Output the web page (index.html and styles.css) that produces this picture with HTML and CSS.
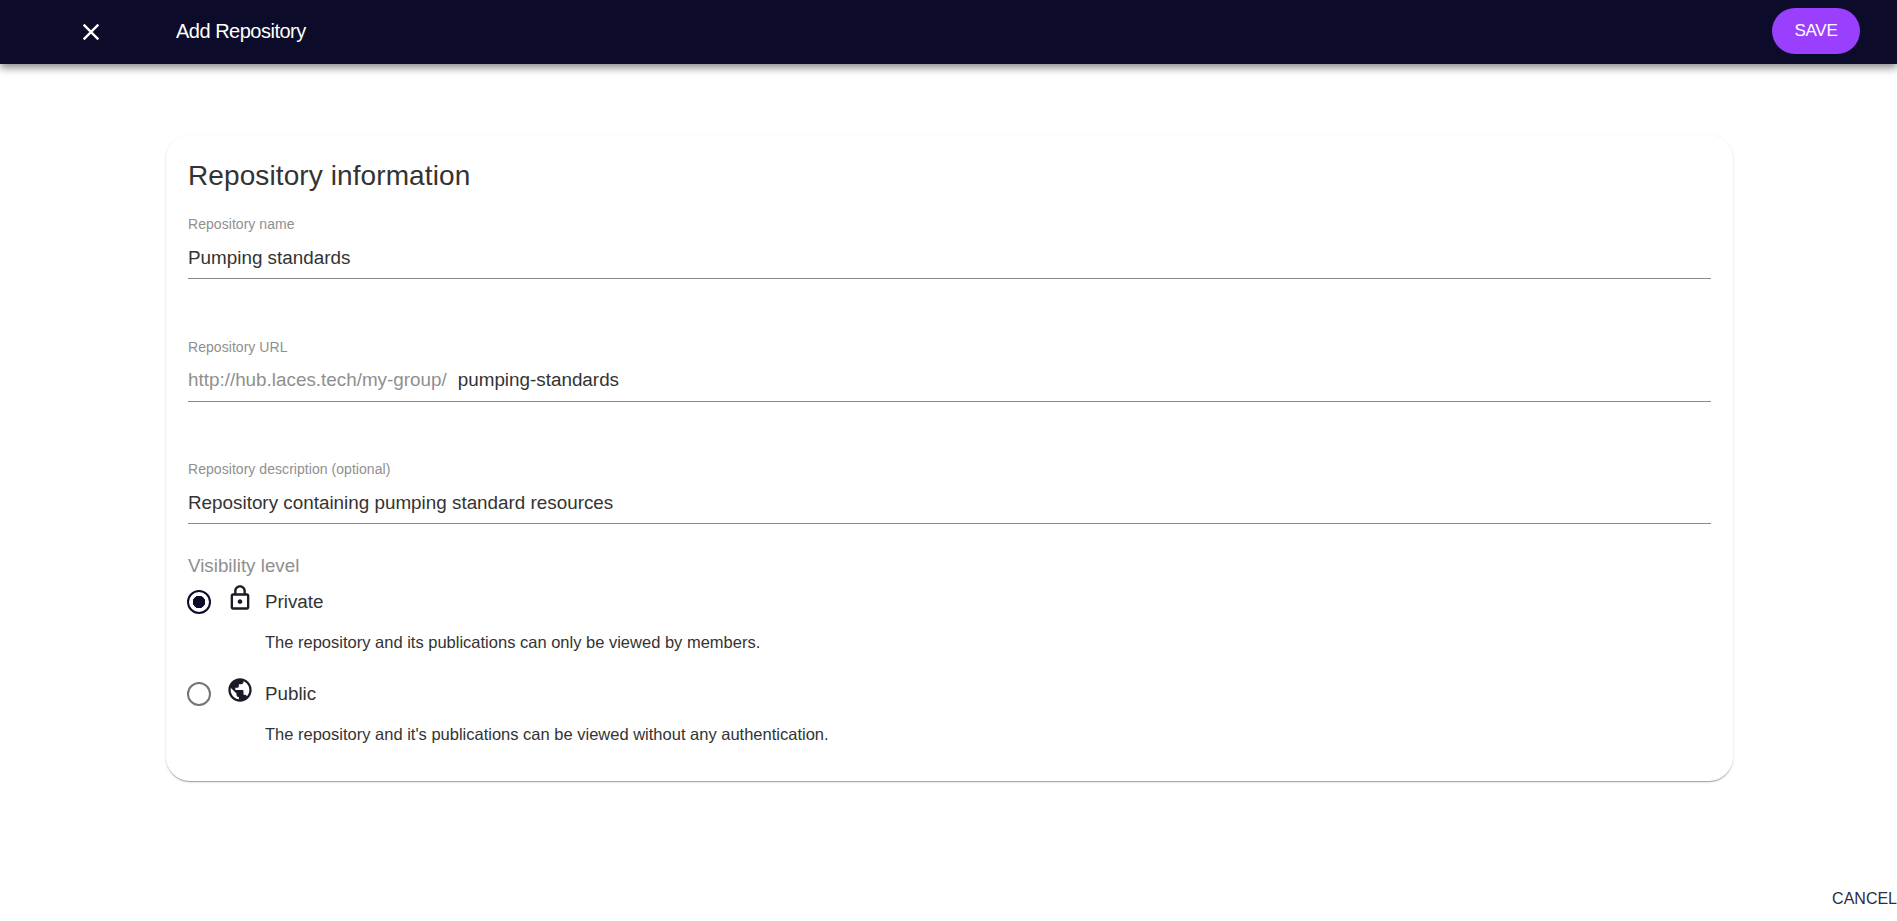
FILE: index.html
```html
<!DOCTYPE html>
<html lang="en">
<head>
<meta charset="utf-8">
<title>Add Repository</title>
<link rel="stylesheet" href="styles.css">
</head>
<body>
<header class="appbar">
  <button class="close" aria-label="Close">
    <svg viewBox="0 0 24 24" width="28" height="28"><path fill="#fff" d="M19 6.41 17.59 5 12 10.59 6.41 5 5 6.41 10.59 12 5 17.59 6.41 19 12 13.41 17.59 19 19 17.59 13.41 12z"/></svg>
  </button>
  <div class="appbar-title">Add Repository</div>
  <button class="save">SAVE</button>
</header>
<main class="content">
  <section class="card">
    <h2 class="card-title">Repository information</h2>
    <div class="field">
      <label class="field-label">Repository name</label>
      <div class="field-input"><span class="value">Pumping standards</span></div>
    </div>
    <div class="field">
      <label class="field-label">Repository URL</label>
      <div class="field-input"><span class="prefix">http://hub.laces.tech/my-group/</span><span class="value">pumping-standards</span></div>
    </div>
    <div class="field">
      <label class="field-label">Repository description (optional)</label>
      <div class="field-input"><span class="value">Repository containing pumping standard resources</span></div>
    </div>
    <div class="visibility-label">Visibility level</div>
    <div class="option">
      <span class="radio radio-on"></span>
      <svg class="option-icon lock" viewBox="0 0 24 24" width="28" height="28"><path fill="#1b1b27" d="M18 8h-1V6c0-2.76-2.24-5-5-5S7 3.24 7 6v2H6c-1.1 0-2 .9-2 2v10c0 1.1.9 2 2 2h12c1.1 0 2-.9 2-2V10c0-1.1-.9-2-2-2zM9 6c0-1.66 1.34-3 3-3s3 1.34 3 3v2H9V6zm9 14H6V10h12v10zm-6-3c1.1 0 2-.9 2-2s-.9-2-2-2-2 .9-2 2 .9 2 2 2z"/></svg>
      <div class="option-text">
        <div class="option-name">Private</div>
        <div class="option-desc">The repository and its publications can only be viewed by members.</div>
      </div>
    </div>
    <div class="option">
      <span class="radio"></span>
      <svg class="option-icon" viewBox="0 0 24 24" width="28" height="28"><path fill="#1b1b27" d="M12 2C6.48 2 2 6.48 2 12s4.48 10 10 10 10-4.48 10-10S17.52 2 12 2zm-1 17.93c-3.95-.49-7-3.85-7-7.93 0-.62.08-1.21.21-1.79L9 15v1c0 1.1.9 2 2 2v1.93zm6.9-2.54c-.26-.81-1-1.39-1.9-1.39h-1v-3c0-.55-.45-1-1-1H8v-2h2c.55 0 1-.45 1-1V7h2c1.1 0 2-.9 2-2v-.41c2.93 1.19 5 4.06 5 7.41 0 2.08-.8 3.97-2.1 5.39z"/></svg>
      <div class="option-text">
        <div class="option-name">Public</div>
        <div class="option-desc">The repository and it's publications can be viewed without any authentication.</div>
      </div>
    </div>
  </section>
  <div class="actions"><button class="cancel">CANCEL</button></div>
</main>
</body>
</html>
```
FILE: styles.css
```css
* { box-sizing: border-box; }
html, body { margin: 0; height: 100%; }
body {
  font-family: "Liberation Sans", Arial, sans-serif;
  color: #333;
  background: #fff;
  overflow: hidden;
}
button { font-family: inherit; border: 0; background: none; padding: 0; cursor: pointer; }
.appbar {
  display: flex;
  align-items: center;
  height: 64px;
  padding: 0 37px 0 77px;
  background: #0c0c2a;
  box-shadow: 0 4px 8px rgba(0,0,0,.45);
  position: relative;
}
.close { display: flex; width: 28px; height: 28px; margin: 0 71px 1px 0; }
.appbar-title { color: #fff; font-size: 20px; letter-spacing: -.5px; flex: 1; margin-bottom: 1px; }
.save {
  width: 88px;
  height: 46px;
  margin-bottom: 2px;
  border-radius: 23px;
  background: #9a3ffd;
  color: #fff;
  font-size: 17px;
  letter-spacing: -.25px;
}
.content { display: flex; flex-direction: column; padding: 71px 0 0; }
.card {
  width: 1567px;
  height: 646px;
  margin-left: 166px;
  padding: 25px 22px 0;
  border-radius: 24px;
  background: #fff;
  box-shadow: 0 2px 1px -1px rgba(0,0,0,.2), 0 1px 1px rgba(0,0,0,.14), 0 1px 3px rgba(0,0,0,.12);
}
.card-title { margin: 0 0 24px; font-size: 28px; font-weight: 400; line-height: 32px; letter-spacing: .1px; color: #333; }
.field { height: 122.7px; }
.field-label { display: block; font-size: 14px; line-height: 16px; letter-spacing: .05px; color: #8f8f8f; }
.field-input {
  display: flex;
  align-items: center;
  height: 47px;
  padding-top: 5px;
  border-bottom: 1px solid #8a8a8a;
  font-size: 18.85px;
}
.prefix { color: #8f8f8f; margin-right: 11px; }
.value { color: #333; }
.visibility-label { margin-top: -29.4px; font-size: 18.8px; line-height: 22px; color: #8f8f8f; }
.option { display: flex; height: 92px; margin-top: 1px; margin-bottom: -1px; }
.radio {
  width: 24px;
  height: 24px;
  margin: 12px 0 0 -1px;
  border: 2.5px solid #757575;
  border-radius: 50%;
  flex: none;
}
.radio-on { border-color: #0c0c2a; background: radial-gradient(circle, #0c0c2a 0 6px, transparent 6.5px); }
.option-icon { flex: none; margin: 6px 0 0 15px; }
.option-text { margin-left: 11px; padding-top: 12px; }
.option-name { font-size: 18.8px; line-height: 24px; color: #333; }
.option-desc { margin-top: 19px; font-size: 16.5px; line-height: 19px; color: #333; }
.actions { display: flex; justify-content: flex-end; margin-top: 108px; }
.cancel { color: #2c2c44; font-size: 16px; line-height: 20px; }
```
